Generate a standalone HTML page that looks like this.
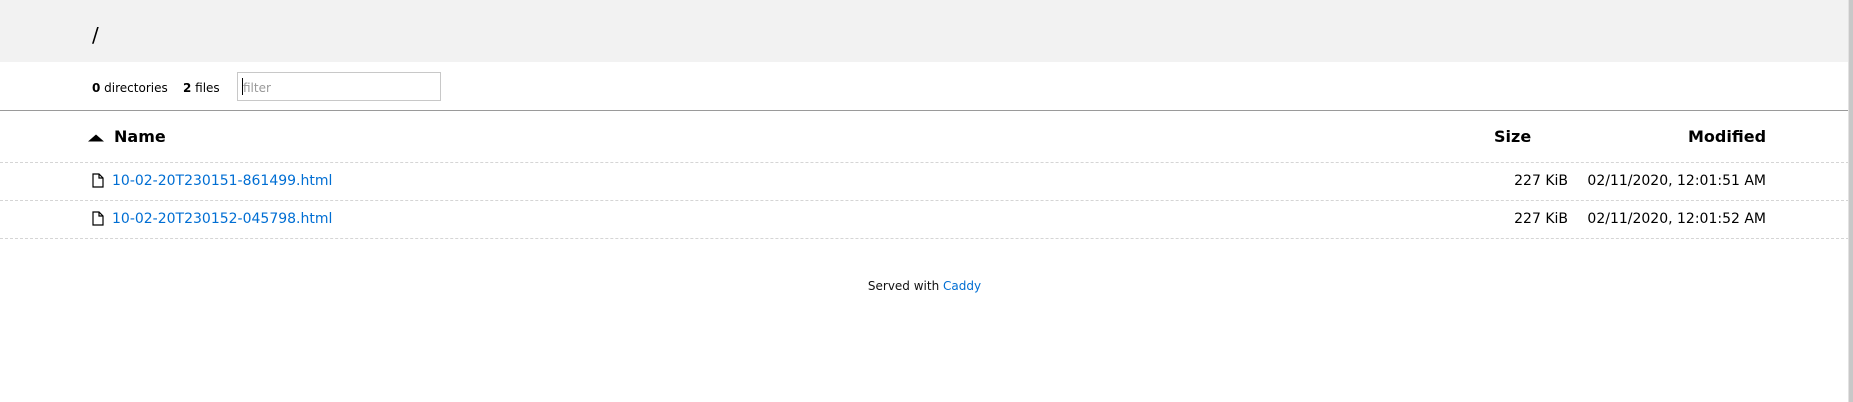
<!DOCTYPE html>
<html><head><meta charset="utf-8"><style>
*{margin:0;padding:0;box-sizing:border-box}
body{width:1853px;height:402px;overflow:hidden;background:#fff;font-family:"DejaVu Sans","Liberation Sans",sans-serif;color:#000;position:relative}
.a{position:absolute;white-space:nowrap}
#hdr{left:0;top:0;width:1849px;height:62px;background:#f2f2f2}
.blue{color:#006ed3}
.dash{position:absolute;left:0;width:1849px;height:0;border-top:1px dashed #d5d5d5}
</style></head><body>
<div class="a" id="hdr"></div>
<div class="a" style="left:92px;top:23px;font-size:20px;line-height:24px">/</div>
<div class="a" style="left:92px;top:80px;font-size:12px;line-height:16px"><b>0</b> directories&nbsp;&nbsp;&nbsp;&nbsp;<b>2</b> files</div>
<div class="a" style="left:237px;top:72px;width:204px;height:29px;border:1px solid #c8c8c8;background:#fff"></div>
<div class="a" style="left:242px;top:78px;width:1px;height:17px;background:#000"></div>
<div class="a" style="left:243px;top:80px;font-size:12px;line-height:16px;color:#999">filter</div>
<div class="a" style="left:0;top:110px;width:1849px;height:1px;background:#9a9a9a"></div>
<svg class="a" style="left:88px;top:133px" width="16" height="9" viewBox="0 0 16 9"><path d="M0 8.5 L8 1.5 L16 8.5 Z" fill="#000"/></svg>
<div class="a" style="left:114px;top:127px;font-size:16px;line-height:20px;font-weight:bold">Name</div>
<div class="a" style="left:1494px;top:127px;font-size:16px;line-height:20px;font-weight:bold">Size</div>
<div class="a" style="left:1688px;top:127px;font-size:16px;line-height:20px;font-weight:bold;width:78px;text-align:right">Modified</div>
<div class="dash" style="top:162px"></div>
<div class="dash" style="top:200px"></div>
<div class="dash" style="top:238px"></div>
<svg class="a" style="left:92px;top:173px" width="12" height="15" viewBox="0 0 12 15"><path d="M1 1 H7 L11 5 V14 H1 Z M7 1 V5 H11" fill="none" stroke="#000" stroke-width="1.2"/></svg>
<svg class="a" style="left:92px;top:211px" width="12" height="15" viewBox="0 0 12 15"><path d="M1 1 H7 L11 5 V14 H1 Z M7 1 V5 H11" fill="none" stroke="#000" stroke-width="1.2"/></svg>
<div class="a blue" style="left:112px;top:172px;font-size:14px;line-height:18px">10-02-20T230151-861499.html</div>
<div class="a blue" style="left:112px;top:210px;font-size:14px;line-height:18px">10-02-20T230152-045798.html</div>
<div class="a" style="left:1468px;top:172px;font-size:14px;line-height:18px;width:100px;text-align:right">227 KiB</div>
<div class="a" style="left:1468px;top:210px;font-size:14px;line-height:18px;width:100px;text-align:right">227 KiB</div>
<div class="a" style="left:1566px;top:172px;font-size:14px;line-height:18px;width:200px;text-align:right">02/11/2020, 12:01:51 AM</div>
<div class="a" style="left:1566px;top:210px;font-size:14px;line-height:18px;width:200px;text-align:right">02/11/2020, 12:01:52 AM</div>
<div class="a" style="left:0;width:1849px;top:278px;font-size:12px;line-height:16px;text-align:center;color:#111">Served with <span class="blue">Caddy</span></div>
<div class="a" style="left:1849px;top:0;width:4px;height:402px;background:#c8c8c8"></div>
<div class="a" style="left:1848px;top:0;width:1px;height:402px;background:#e2e2e2"></div>
</body></html>
